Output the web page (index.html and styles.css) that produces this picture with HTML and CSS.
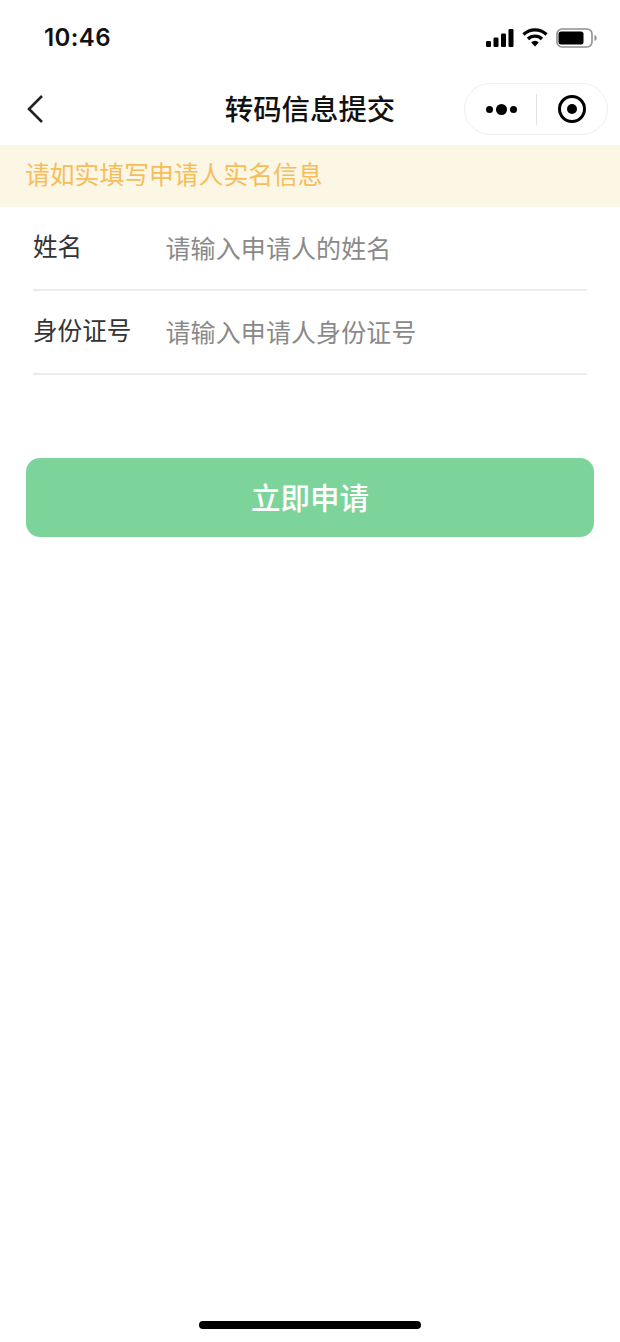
FILE: index.html
```html
<!DOCTYPE html>
<html lang="zh-CN">
<head>
    <meta charset="UTF-8">
    <meta name="viewport" content="width=device-width, initial-scale=1.0">
    <title>转码信息提交</title>
    <link rel="stylesheet" href="styles.css">
</head>
<body>

<div class="page">
    <!-- Status bar -->
    <div class="status-bar">
        <span class="time">10:46</span>
        <div class="status-icons">
            <svg class="signal" width="28" height="18" viewBox="0 0 28 18">
                <rect x="0" y="12" width="5" height="6" rx="1.2"/>
                <rect x="7.5" y="8.5" width="5" height="9.5" rx="1.2"/>
                <rect x="15" y="4.5" width="5" height="13.5" rx="1.2"/>
                <rect x="22.5" y="0" width="5" height="18" rx="1.2"/>
            </svg>
            <svg class="wifi" width="26" height="19" viewBox="0 0 26 19">
                <path d="M1.5 6.5 A16.5 16.5 0 0 1 24.5 6.5" fill="none" stroke="#000" stroke-width="3.2"/>
                <path d="M6 11 A10 10 0 0 1 20 11" fill="none" stroke="#000" stroke-width="3.2"/>
                <path d="M9.2 14.4 A5.4 5.4 0 0 1 16.8 14.4 L13 18.6 Z"/>
            </svg>
            <svg class="battery" width="41" height="20" viewBox="0 0 41 20">
                <rect x="1" y="1" width="35" height="18" rx="5" fill="none" stroke="#8e8e8e" stroke-width="1.6"/>
                <rect x="2.5" y="3.5" width="25" height="13" rx="2.5"/>
                <path d="M38.5 7 C40 7.6 40.6 8.8 40.6 10 C40.6 11.2 40 12.4 38.5 13 Z" fill="#8e8e8e"/>
            </svg>
        </div>
    </div>

    <!-- Navigation bar -->
    <header class="nav-bar">
        <svg class="back-icon" width="18" height="30" viewBox="0 0 18 30">
            <path d="M16 2 L3 15 L16 28" fill="none" stroke="#222" stroke-width="2.6"/>
        </svg>
        <h1 class="nav-title">转码信息提交</h1>
        <div class="capsule">
            <div class="capsule-more">
                <span class="dot"></span>
                <span class="dot dot-big"></span>
                <span class="dot"></span>
            </div>
            <div class="capsule-line"></div>
            <div class="capsule-close">
                <span class="close-ring"><span class="close-center"></span></span>
            </div>
        </div>
    </header>

    <div class="notice">请如实填写申请人实名信息</div>

    <form class="apply-form">
        <div class="form-row">
            <label class="form-label" for="applyName">姓名</label>
            <input class="form-input" type="text" id="applyName" placeholder="请输入申请人的姓名">
        </div>
        <div class="form-row">
            <label class="form-label" for="applyId">身份证号</label>
            <input class="form-input" type="text" id="applyId" placeholder="请输入申请人身份证号">
        </div>
        <button type="button" class="submit-btn">立即申请</button>
    </form>

    <div class="home-bar"></div>
</div>

</body>
</html>
```

FILE: styles.css
```css
* {
    box-sizing: border-box;
}

body {
    margin: 0;
    padding: 0;
    font-family: "Noto Sans CJK SC", "Noto Sans", sans-serif;
    background-color: #fff;
    color: #333;
}

.page {
    display: flex;
    flex-direction: column;
    height: 1342px;
    overflow: hidden;
}

/* Status bar */
.status-bar {
    display: flex;
    align-items: center;
    justify-content: space-between;
    height: 75px;
    padding: 0 23px 0 44px;
}

.time {
    font-family: Inter, "Liberation Sans", sans-serif;
    font-size: 24px;
    font-weight: 600;
    letter-spacing: 0.4px;
    color: #111;
}

.status-icons {
    display: flex;
    align-items: center;
    gap: 8px;
}

/* Navigation bar */
.nav-bar {
    position: relative;
    display: flex;
    align-items: center;
    justify-content: center;
    height: 70px;
    padding-bottom: 6px;
}

.back-icon {
    position: absolute;
    left: 26px;
    top: 19px;
}

.nav-title {
    margin: 0;
    font-size: 28.4px;
    font-weight: 500;
    color: #111;
}

.capsule {
    position: absolute;
    right: 12px;
    top: 8px;
    display: flex;
    align-items: center;
    width: 144px;
    height: 52px;
    border: 1px solid #efefef;
    border-radius: 26px;
    background-color: #fff;
}

.capsule-more {
    display: flex;
    align-items: center;
    justify-content: center;
    gap: 3px;
    width: 71px;
    padding-left: 2px;
}

.dot {
    width: 7px;
    height: 7px;
    border-radius: 50%;
    background-color: #000;
}

.dot-big {
    width: 11px;
    height: 11px;
}

.capsule-line {
    width: 1px;
    height: 31px;
    background-color: #e2e2e2;
}

.capsule-close {
    display: flex;
    align-items: center;
    justify-content: center;
    width: 70px;
}

.close-ring {
    display: flex;
    align-items: center;
    justify-content: center;
    width: 28px;
    height: 28px;
    border: 3px solid #000;
    border-radius: 50%;
}

.close-center {
    width: 10px;
    height: 10px;
    border-radius: 50%;
    background-color: #000;
}

/* Notice */
.notice {
    height: 62px;
    padding-left: 25px;
    line-height: 57px;
    font-size: 24.8px;
    color: #f6bd5c;
    background-color: #fcf6e4;
}

/* Form */
.apply-form {
    display: flex;
    flex-direction: column;
}

.form-row {
    display: flex;
    align-items: center;
    height: 84px;
    margin: 0 33px;
    border-bottom: 2px solid #ececec;
}

.form-label {
    width: 132.5px;
    flex-shrink: 0;
    font-size: 24.6px;
    color: #333;
    position: relative;
    top: -3px;
}

.form-input {
    flex: 1;
    min-width: 0;
    padding: 0 0 3px;
    border: none;
    outline: none;
    font-family: inherit;
    font-size: 25px;
    letter-spacing: 0.1px;
    color: #333;
    background: transparent;
}

.form-input::placeholder {
    color: #8a8a8a;
    opacity: 1;
}

.submit-btn {
    height: 79px;
    margin: 83px 26px 0;
    padding: 0 0 3px;
    border: none;
    border-radius: 14px;
    font-family: inherit;
    font-size: 29.5px;
    font-weight: 500;
    color: #fff;
    background-color: #7dd49b;
}

.home-bar {
    width: 222px;
    height: 8px;
    margin: auto auto 13px;
    border-radius: 4px;
    background-color: #000;
}
```
